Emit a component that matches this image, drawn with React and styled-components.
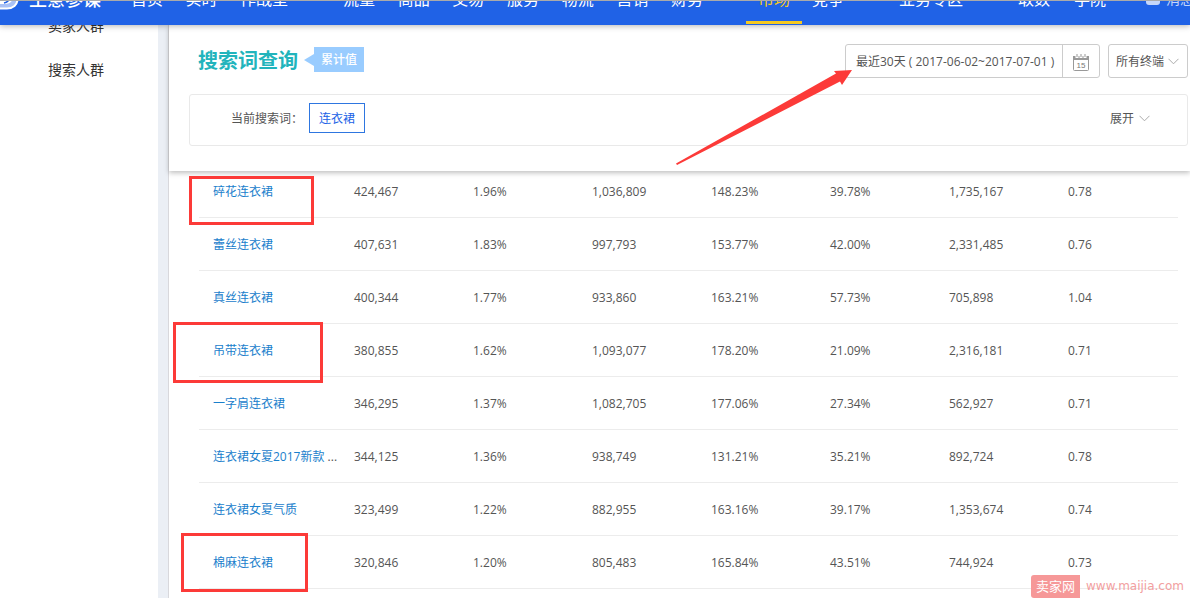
import styled, { createGlobalStyle } from "styled-components";

const navGroups = [
  { width: 157, items: ["首页", "实时", "作战室"] },
  { width: 360, items: ["流量", "商品", "交易", "服务", "物流", "营销", "财务"] },
  { width: 86, items: ["市场", "竞争"] },
  { width: 64, items: ["业务专区"] },
  { width: 88, items: ["取数", "学院"] },
];

const rows = [
  ["碎花连衣裙", "424,467", "1.96%", "1,036,809", "148.23%", "39.78%", "1,735,167", "0.78"],
  ["蕾丝连衣裙", "407,631", "1.83%", "997,793", "153.77%", "42.00%", "2,331,485", "0.76"],
  ["真丝连衣裙", "400,344", "1.77%", "933,860", "163.21%", "57.73%", "705,898", "1.04"],
  ["吊带连衣裙", "380,855", "1.62%", "1,093,077", "178.20%", "21.09%", "2,316,181", "0.71"],
  ["一字肩连衣裙", "346,295", "1.37%", "1,082,705", "177.06%", "27.34%", "562,927", "0.71"],
  ["连衣裙女夏2017新款", "344,125", "1.36%", "938,749", "131.21%", "35.21%", "892,724", "0.78"],
  ["连衣裙女夏气质", "323,499", "1.22%", "882,955", "163.16%", "39.17%", "1,353,674", "0.74"],
  ["棉麻连衣裙", "320,846", "1.20%", "805,483", "165.84%", "43.51%", "744,924", "0.73"],
];

const marks = [
  { left: 189, top: 176, width: 125, height: 49 },
  { left: 173, top: 322, width: 150, height: 61 },
  { left: 181, top: 533, width: 127, height: 59 },
];

export default function App() {
  return (
    <Page>
      <GlobalStyle />
      <Header>
        <Logo viewBox="0 0 20 20" aria-hidden="true">
          <path d="M-4 18.5H7C13 18.5 17.5 15 17.5 9V0H-4Z" fill="#a9c1f5" stroke="#fff" strokeWidth="2" />
          <path d="M-2 14H5C10 14 13 11 13 7V0H-2Z" fill="#fff" />
          <path d="M4 13C8 12 10 10 10 6" fill="none" stroke="#2062e6" strokeWidth="1.5" />
        </Logo>
        <Brand href="#">生意参谋</Brand>
        {navGroups.map((group) => (
          <NavGroup key={group.items[0]} $width={group.width}>
            {group.items.map((item) => (
              <NavLink key={item} href="#" $active={item === "市场"}>
                {item}
              </NavLink>
            ))}
          </NavGroup>
        ))}
        <Message href="#">
          <svg width="14" height="12" viewBox="0 0 14 12" aria-hidden="true">
            <rect width="14" height="12" rx="3" fill="currentColor" />
          </svg>
          消息
        </Message>
      </Header>
      <Body>
        <Sidebar>
          <SideLink href="#">卖家人群</SideLink>
          <SideLink href="#">搜索人群</SideLink>
        </Sidebar>
        <Main>
          <Panel>
            <TitleBar>
              <Title>搜索词查询</Title>
              <Tag>累计值</Tag>
              <DatePicker>
                <DateInput aria-label="日期" readOnly value="最近30天 ( 2017-06-02~2017-07-01 )" />
                <CalendarButton aria-label="选择日期">
                  <CalendarIcon />
                </CalendarButton>
              </DatePicker>
              <SelectBox>
                <Select aria-label="终端">
                  <option>所有终端</option>
                </Select>
                <Chevron />
              </SelectBox>
            </TitleBar>
            <QueryBox>
              <span>当前搜索词：</span>
              <Keyword>连衣裙</Keyword>
              <Expand>
                展开
                <Chevron />
              </Expand>
            </QueryBox>
          </Panel>
          <Table>
            <colgroup>
              <Col $width={141} />
              {[1, 2, 3, 4, 5, 6].map((n) => (
                <Col key={n} $width={119} />
              ))}
              <col />
            </colgroup>
            <tbody>
              {rows.map(([name, ...values]) => (
                <tr key={name}>
                  <Cell>
                    <WordLink href="#">{name}</WordLink>
                    {name.length > 10 && " ..."}
                  </Cell>
                  {values.map((value, i) => (
                    <Cell key={i}>{value}</Cell>
                  ))}
                </tr>
              ))}
            </tbody>
          </Table>
        </Main>
      </Body>
      {marks.map((mark) => (
        <Mark key={mark.top} style={mark} />
      ))}
      <Arrow viewBox="0 0 180 98" aria-hidden="true">
        <path d="M1 95.5L161 5.5L159 3L177 2L167 17L165 13.5L2 97Z" fill="#fc3a38" />
      </Arrow>
      <Watermark>
        <WatermarkName>卖家网</WatermarkName>
        www.maijia.com
      </Watermark>
    </Page>
  );
}

function Chevron() {
  return (
    <ChevronSvg viewBox="0 0 11 7" aria-hidden="true">
      <path d="M0.5 0.8L5.5 5.8L10.5 0.8" fill="none" stroke="#aaa" />
    </ChevronSvg>
  );
}

function CalendarIcon() {
  return (
    <svg width="16" height="17" viewBox="0 0 16 17" aria-hidden="true">
      <path d="M0.5 2.5h15v13a1 1 0 0 1-1 1h-13a1 1 0 0 1-1-1z" fill="#fff" stroke="#999" />
      <path d="M0 2h16v4H0z" fill="#999" />
      <path d="M4 0v4M8 0v4M12 0v4" stroke="#fff" strokeWidth="3" />
      <path d="M4 0v3M8 0v3M12 0v3" stroke="#999" />
      <text x="8" y="14" textAnchor="middle" fontSize="8" fontFamily="Liberation Sans, sans-serif" fill="#777">15</text>
    </svg>
  );
}

const GlobalStyle = createGlobalStyle`
  * {
    box-sizing: border-box;
  }
  body {
    margin: 0;
    overflow: hidden;
    background: #fff;
  }
  body, button, input, select {
    font-family: "Open Sans", "Noto Sans CJK SC", sans-serif;
    font-size: 12px;
    color: #555;
  }
  a {
    text-decoration: none;
  }
`;

const Page = styled.div`
  position: relative;
  height: 100vh;
  display: flex;
  flex-direction: column;
  overflow: hidden;
`;

const Header = styled.header`
  position: relative;
  z-index: 3;
  flex: none;
  display: flex;
  align-items: flex-end;
  height: 25px;
  padding-bottom: 1px;
  border-top: 1px solid #aaa;
  background: #2062e6;
  box-shadow: 0 1px 6px rgba(0, 0, 0, 0.3);
  overflow: hidden;
  white-space: nowrap;
`;

const Logo = styled.svg`
  flex: none;
  align-self: flex-start;
  width: 20px;
  height: 20px;
  margin: -11px 9px 0 0;
`;

const Brand = styled.a`
  margin-right: 30px;
  padding-bottom: 3px;
  font-size: 18px;
  font-weight: 500;
  line-height: 44px;
  color: #fff;
`;

const NavGroup = styled.nav`
  flex: none;
  display: flex;
  justify-content: space-between;
  width: ${({ $width }) => $width}px;
  & + & {
    margin-left: 55px;
    position: relative;
  }
  & + &::before {
    content: "";
    position: absolute;
    left: -28px;
    bottom: 17px;
    height: 20px;
    border-left: 1px solid #6f9bf2;
  }
`;

const NavLink = styled.a`
  margin: 0 -12px;
  padding: 0 12px;
  font-size: 16px;
  line-height: 44px;
  color: ${({ $active }) => ($active ? "#f5c920" : "#fff")};
  border-bottom: 3px solid ${({ $active }) => ($active ? "#f5c920" : "transparent")};
`;

const Message = styled.a`
  display: flex;
  align-items: center;
  gap: 6px;
  margin-left: 40px;
  padding-bottom: 3px;
  font-size: 14px;
  line-height: 44px;
  color: #c5d6fa;
`;

const Body = styled.div`
  flex: 1;
  display: flex;
  min-height: 0;
`;

const Sidebar = styled.aside`
  flex: none;
  width: 169px;
  padding: 0 0 0 48px;
  border-right: 1px solid #d8d8dc;
  background: linear-gradient(to left, #ebeff5 10px, #fff 10px);
`;

const SideLink = styled.a`
  display: block;
  margin-top: -21px;
  font-size: 14px;
  line-height: 44px;
  color: #333;
  & + & {
    margin-top: 0;
  }
`;

const Main = styled.main`
  flex: 1;
  min-width: 0;
`;

const Panel = styled.section`
  position: relative;
  z-index: 2;
  height: 146px;
  padding: 19px 2px 0 20px;
  background: #fff;
  box-shadow: 0 2px 5px rgba(0, 0, 0, 0.25);
`;

const TitleBar = styled.div`
  display: flex;
  align-items: center;
  height: 34px;
  padding-left: 9px;
`;

const Title = styled.h1`
  margin: 0;
  font-size: 20px;
  line-height: 34px;
  font-weight: 700;
  color: #22b4bc;
`;

const Tag = styled.span`
  position: relative;
  margin: 0 0 4px 16px;
  padding: 0 7px;
  line-height: 25px;
  font-weight: 500;
  color: #fff;
  background: #99ccff;
  &::before {
    content: "";
    position: absolute;
    left: -10px;
    top: 7px;
    border: 6px solid transparent;
    border-left: 0;
    border-right: 10px solid #99ccff;
  }
`;

const DatePicker = styled.div`
  display: flex;
  width: 255px;
  height: 34px;
  margin: 0 8px 0 auto;
  border: 1px solid #ccc;
  border-radius: 3px;
`;

const DateInput = styled.input`
  flex: 1;
  min-width: 0;
  padding: 0 0 0 10px;
  border: 0;
  background: none;
  outline: none;
`;

const CalendarButton = styled.button`
  display: flex;
  align-items: center;
  justify-content: center;
  width: 37px;
  padding: 2px 0 0;
  border: 0;
  border-left: 1px solid #ccc;
  background: none;
`;

const SelectBox = styled.div`
  display: grid;
  align-items: center;
  width: 80px;
  height: 34px;
  border: 1px solid #ccc;
  border-radius: 3px;
  > * {
    grid-area: 1 / 1;
  }
  > svg {
    justify-self: end;
    margin-right: 8px;
    pointer-events: none;
  }
`;

const Select = styled.select`
  height: 32px;
  padding: 0 0 0 7px;
  border: 0;
  background: none;
  appearance: none;
`;

const ChevronSvg = styled.svg`
  width: 11px;
  height: 7px;
`;

const QueryBox = styled.div`
  display: flex;
  align-items: flex-start;
  height: 52px;
  margin-top: 16px;
  padding: 8px 37px 0 41px;
  border: 1px solid #e9e9e9;
  border-radius: 3px;
  line-height: 32px;
`;

const Keyword = styled.button`
  width: 56px;
  height: 30px;
  margin-left: 6px;
  padding: 0;
  border: 1px solid #2e76e0;
  color: #2062e6;
  background: #fff;
`;

const Expand = styled.button`
  display: flex;
  align-items: center;
  gap: 5px;
  height: 30px;
  margin-left: auto;
  padding: 0;
  border: 0;
  background: none;
`;

const Table = styled.table`
  width: calc(100% - 42px);
  margin: -6px 12px 0 30px;
  table-layout: fixed;
  border-collapse: separate;
  border-spacing: 0;
`;

const Col = styled.col`
  width: ${({ $width }) => $width}px;
`;

const Cell = styled.td`
  height: 53px;
  padding: 2px 0 0 14px;
  border-bottom: 1px solid #ececec;
  line-height: 20px;
  white-space: nowrap;
`;

const WordLink = styled.a`
  color: #1a80cc;
`;

/* hand-drawn highlights over the page */
const Mark = styled.div`
  position: absolute;
  z-index: 4;
  border: 3px solid #fc3a38;
  pointer-events: none;
`;

const Arrow = styled.svg`
  position: absolute;
  z-index: 4;
  left: 675px;
  top: 68px;
  width: 180px;
  height: 98px;
  pointer-events: none;
`;

const Watermark = styled.div`
  position: absolute;
  z-index: 4;
  right: 6px;
  bottom: 0;
  display: flex;
  gap: 6px;
  font-family: "DejaVu Sans", "Noto Sans CJK SC", sans-serif;
  font-size: 12px;
  line-height: 23px;
  color: #f2a0a0;
`;

const WatermarkName = styled.span`
  padding: 0 5px;
  font-size: 13px;
  border-radius: 3px 0 0 3px;
  color: #fff;
  background: #f69898;
`;
